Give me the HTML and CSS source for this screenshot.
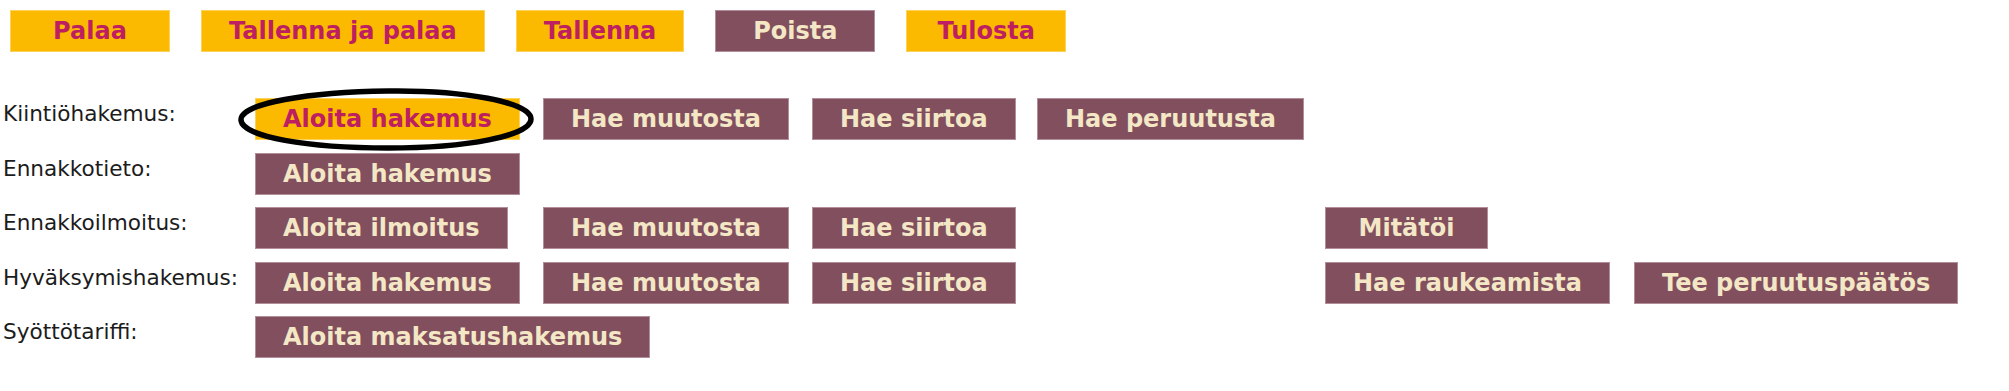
FILE: index.html
```html
<!DOCTYPE html>
<html lang="fi">
<head>
<meta charset="utf-8">
<title>Hakemukset</title>
<link rel="stylesheet" href="styles.css">
</head>
<body>
<div class="toolbar">
  <span class="btn btn-yellow btn-top">Palaa</span>
  <span class="btn btn-yellow btn-top">Tallenna ja palaa</span>
  <span class="btn btn-yellow btn-top">Tallenna</span>
  <span class="btn btn-purple btn-top">Poista</span>
  <span class="btn btn-yellow btn-top">Tulosta</span>
</div>

<div class="form">
  <div class="label">Kiintiöhakemus:</div>
  <div class="cell c1 marked">
    <span class="btn btn-yellow">Aloita hakemus</span>
    <svg class="oval" viewBox="0 0 297 63" width="297" height="63" aria-hidden="true">
      <path d="M150 3 C 225 2, 293 14, 293 31 C 293 48, 228 60, 150 60 C 70 60, 4 49, 3 32 C 2 15, 72 4, 150 3 Z" fill="none" stroke="#000" stroke-width="5.5"/>
    </svg>
  </div>
  <div class="cell c2"><span class="btn btn-purple">Hae muutosta</span></div>
  <div class="cell c3"><span class="btn btn-purple">Hae siirtoa</span></div>
  <div class="cell c4"><span class="btn btn-purple">Hae peruutusta</span></div>

  <div class="label">Ennakkotieto:</div>
  <div class="cell c1"><span class="btn btn-purple">Aloita hakemus</span></div>

  <div class="label">Ennakkoilmoitus:</div>
  <div class="cell c1"><span class="btn btn-purple">Aloita ilmoitus</span></div>
  <div class="cell c2"><span class="btn btn-purple">Hae muutosta</span></div>
  <div class="cell c3"><span class="btn btn-purple">Hae siirtoa</span></div>
  <div class="cell c5"><span class="btn btn-purple">Mitätöi</span></div>

  <div class="label">Hyväksymishakemus:</div>
  <div class="cell c1"><span class="btn btn-purple">Aloita hakemus</span></div>
  <div class="cell c2"><span class="btn btn-purple">Hae muutosta</span></div>
  <div class="cell c3"><span class="btn btn-purple">Hae siirtoa</span></div>
  <div class="cell c5"><span class="btn btn-purple">Hae raukeamista</span></div>
  <div class="cell c6"><span class="btn btn-purple">Tee peruutuspäätös</span></div>

  <div class="label">Syöttötariffi:</div>
  <div class="cell c1 span2"><span class="btn btn-purple">Aloita maksatushakemus</span></div>
</div>
</body>
</html>
```

FILE: styles.css
```css
html, body {
  margin: 0;
  padding: 0;
  background: #ffffff;
}

body {
  font-family: "DejaVu Sans", Verdana, sans-serif;
  color: #1c1c1c;
}

.toolbar {
  display: flex;
  gap: 31px;
  padding: 10px 0 0 10px;
}

.btn {
  box-sizing: border-box;
  display: inline-flex;
  align-items: center;
  justify-content: center;
  height: 42px;
  padding: 0 27px;
  font-family: "DejaVu Sans", Verdana, sans-serif;
  font-weight: bold;
  font-size: 24px;
  white-space: nowrap;
  line-height: 1;
}

.btn-top {
  min-width: 160px;
}

.btn-yellow {
  background: #fbba00;
  color: #bd1f60;
  border: 1px solid #fcd35a;
}

.btn-purple {
  background: #824f5f;
  color: #f3e7c6;
  border: 1px solid #b18e98;
}

.form {
  display: grid;
  grid-template-columns: 255px 288px 269px 225px 288px 309px auto;
  row-gap: 12.5px;
  margin-top: 46px;
}

.label {
  grid-column: 1;
  padding: 4px 0 0 3px;
  font-size: 21.6px;
  line-height: 24px;
  white-space: nowrap;
}

.cell {
  display: flex;
  align-items: flex-start;
}

.c1 { grid-column: 2; }
.c2 { grid-column: 3; }
.c3 { grid-column: 4; }
.c4 { grid-column: 5; }
.c5 { grid-column: 6; }
.c6 { grid-column: 7; }
.span2 { grid-column: 2 / span 2; }

.c5 .btn { min-width: 163px; }

.marked {
  position: relative;
}

.oval {
  position: absolute;
  left: -17px;
  top: -10px;
  overflow: visible;
}
```
